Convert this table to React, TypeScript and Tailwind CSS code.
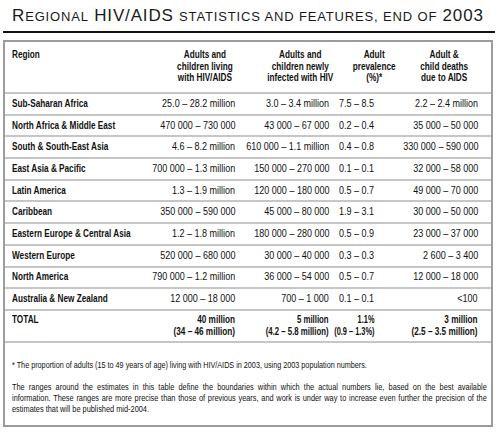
import type { ReactNode } from 'react';

const rows = [
  ['Sub-Saharan Africa', '25.0 – 28.2 million', '3.0 – 3.4 million', '7.5 – 8.5', '2.2 – 2.4 million'],
  ['North Africa & Middle East', '470 000 – 730 000', '43 000 – 67 000', '0.2 – 0.4', '35 000 – 50 000'],
  ['South & South-East Asia', '4.6 – 8.2 million', '610 000 – 1.1 million', '0.4 – 0.8', '330 000 – 590 000'],
  ['East Asia & Pacific', '700 000 – 1.3 million', '150 000 – 270 000', '0.1 – 0.1', '32 000 – 58 000'],
  ['Latin America', '1.3 – 1.9 million', '120 000 – 180 000', '0.5 – 0.7', '49 000 – 70 000'],
  ['Caribbean', '350 000 – 590 000', '45 000 – 80 000', '1.9 – 3.1', '30 000 – 50 000'],
  ['Eastern Europe & Central Asia', '1.2 – 1.8 million', '180 000 – 280 000', '0.5 – 0.9', '23 000 – 37 000'],
  ['Western Europe', '520 000 – 680 000', '30 000 – 40 000', '0.3 – 0.3', '2 600 – 3 400'],
  ['North America', '790 000 – 1.2 million', '36 000 – 54 000', '0.5 – 0.7', '12 000 – 18 000'],
  ['Australia & New Zealand', '12 000 – 18 000', '700 – 1 000', '0.1 – 0.1', '<100'],
];

const grid = 'grid grid-cols-[145px_90px_95px_60px_96px]';

// no narrow font installed, so squeeze the text horizontally like Arial Narrow
const Narrow = ({ children, origin, scale = 'scale-x-[0.82]' }: { children: ReactNode; origin: string; scale?: string }) => (
  <span className={`inline-block whitespace-nowrap ${scale} ${origin}`}>{children}</span>
);

const Big = ({ children }: { children: ReactNode }) => <span className="text-[17px]">{children}</span>;
const Small = ({ children }: { children: ReactNode }) => <span className="text-[13px] uppercase">{children}</span>;

const App = () => {
  return (
    <div className="w-[500px] h-[433px] bg-white text-[#111] font-['Liberation_Sans',Arial,sans-serif] overflow-hidden">
      <h1 className="pl-[12px] pt-[5px] h-[31px] leading-[22px] text-[#1a1a1a] tracking-[0.85px] whitespace-nowrap">
        <Big>R</Big><Small>egional</Small> <Big>HIV/AIDS</Big> <Small>statistics and features, end of</Small> <Big>2003</Big>
      </h1>
      <div className="ml-[3px] w-[492px] h-[2px] bg-[#111]" />

      <div className="ml-[3px] mt-[7px] w-[490px] h-[387px] border-2 border-[#9c9c9c]">
        {/* header */}
        <div className={`${grid} h-[50px] pt-[7px] text-[10px] leading-[11.7px] font-bold`}>
          <div className="pl-[7px]"><Narrow origin="origin-left">Region</Narrow></div>
          <div className="pl-[25px] pr-[5px] flex justify-center">
            <Narrow origin="origin-center"><span className="block text-center">Adults and<br />children living<br />with HIV/AIDS</span></Narrow>
          </div>
          <div className="pl-[31px] pr-[6px] flex justify-center">
            <Narrow origin="origin-center"><span className="block text-center">Adults and<br />children newly<br />infected with HIV</span></Narrow>
          </div>
          <div className="pl-[18px] flex justify-center">
            <Narrow origin="origin-center"><span className="block text-center">Adult<br />prevalence<br />(%)*</span></Narrow>
          </div>
          <div className="pl-[7px] pr-[5px] flex justify-center">
            <Narrow origin="origin-center"><span className="block text-center">Adult &amp;<br />child deaths<br />due to AIDS</span></Narrow>
          </div>
        </div>

        {rows.map((r) => (
          <div key={r[0]} className={`${grid} h-[21.7px] border-t-2 border-[#c6c6c6] items-center text-[10px] leading-[12px]`}>
            <div className="pl-[7px] font-bold"><Narrow origin="origin-left">{r[0]}</Narrow></div>
            <div className="pr-[5px] flex justify-end"><Narrow origin="origin-right" scale="scale-x-[0.9]">{r[1]}</Narrow></div>
            <div className="pr-[6px] flex justify-end"><Narrow origin="origin-right" scale="scale-x-[0.9]">{r[2]}</Narrow></div>
            <div className="pr-[21px] flex justify-end"><Narrow origin="origin-right" scale="scale-x-[0.9]">{r[3]}</Narrow></div>
            <div className="pr-[13px] flex justify-end"><Narrow origin="origin-right" scale="scale-x-[0.9]">{r[4]}</Narrow></div>
          </div>
        ))}

        <div className={`${grid} h-[34px] border-y-2 border-[#c6c6c6] pt-[3px] text-[10px] leading-[12px] font-bold`}>
          <div className="pl-[7px]"><Narrow origin="origin-left">TOTAL</Narrow></div>
          <div className="pr-[5px] flex justify-end">
            <Narrow origin="origin-right"><span className="block text-right">40 million<br />(34 – 46 million)</span></Narrow>
          </div>
          <div className="pr-[6px] flex justify-end">
            <Narrow origin="origin-right" scale="scale-x-[0.78]"><span className="block text-right">5 million<br />(4.2 – 5.8 million)</span></Narrow>
          </div>
          <div className="pr-[21px] flex justify-end">
            <Narrow origin="origin-right" scale="scale-x-[0.74]"><span className="block text-right">1.1%<br />(0.9 – 1.3%)</span></Narrow>
          </div>
          <div className="pr-[13px] flex justify-end">
            <Narrow origin="origin-right"><span className="block text-right">3 million<br />(2.5 – 3.5 million)</span></Narrow>
          </div>
        </div>

        {/* notes */}
        <div className="pl-[7px] pt-[17px] text-[9px] text-[#111]">
          <div className="w-[579px] origin-left scale-x-[0.82]">
            <p className="leading-[11px] scale-x-[0.98] origin-left">
              * The proportion of adults (15 to 49 years of age) living with HIV/AIDS in 2003, using 2003 population numbers.
            </p>
            <p className="mt-[11px] leading-[11px]">
              <span className="block [text-align-last:justify]">
                The ranges around the estimates in this table define the boundaries within which the actual numbers lie, based on the best available
              </span>
              <span className="block [text-align-last:justify]">
                information. These ranges are more precise than those of previous years, and work is under way to increase even further the precision of the
              </span>
              <span className="block">estimates that will be published mid-2004.</span>
            </p>
          </div>
        </div>
      </div>
    </div>
  );
};

export default App;
